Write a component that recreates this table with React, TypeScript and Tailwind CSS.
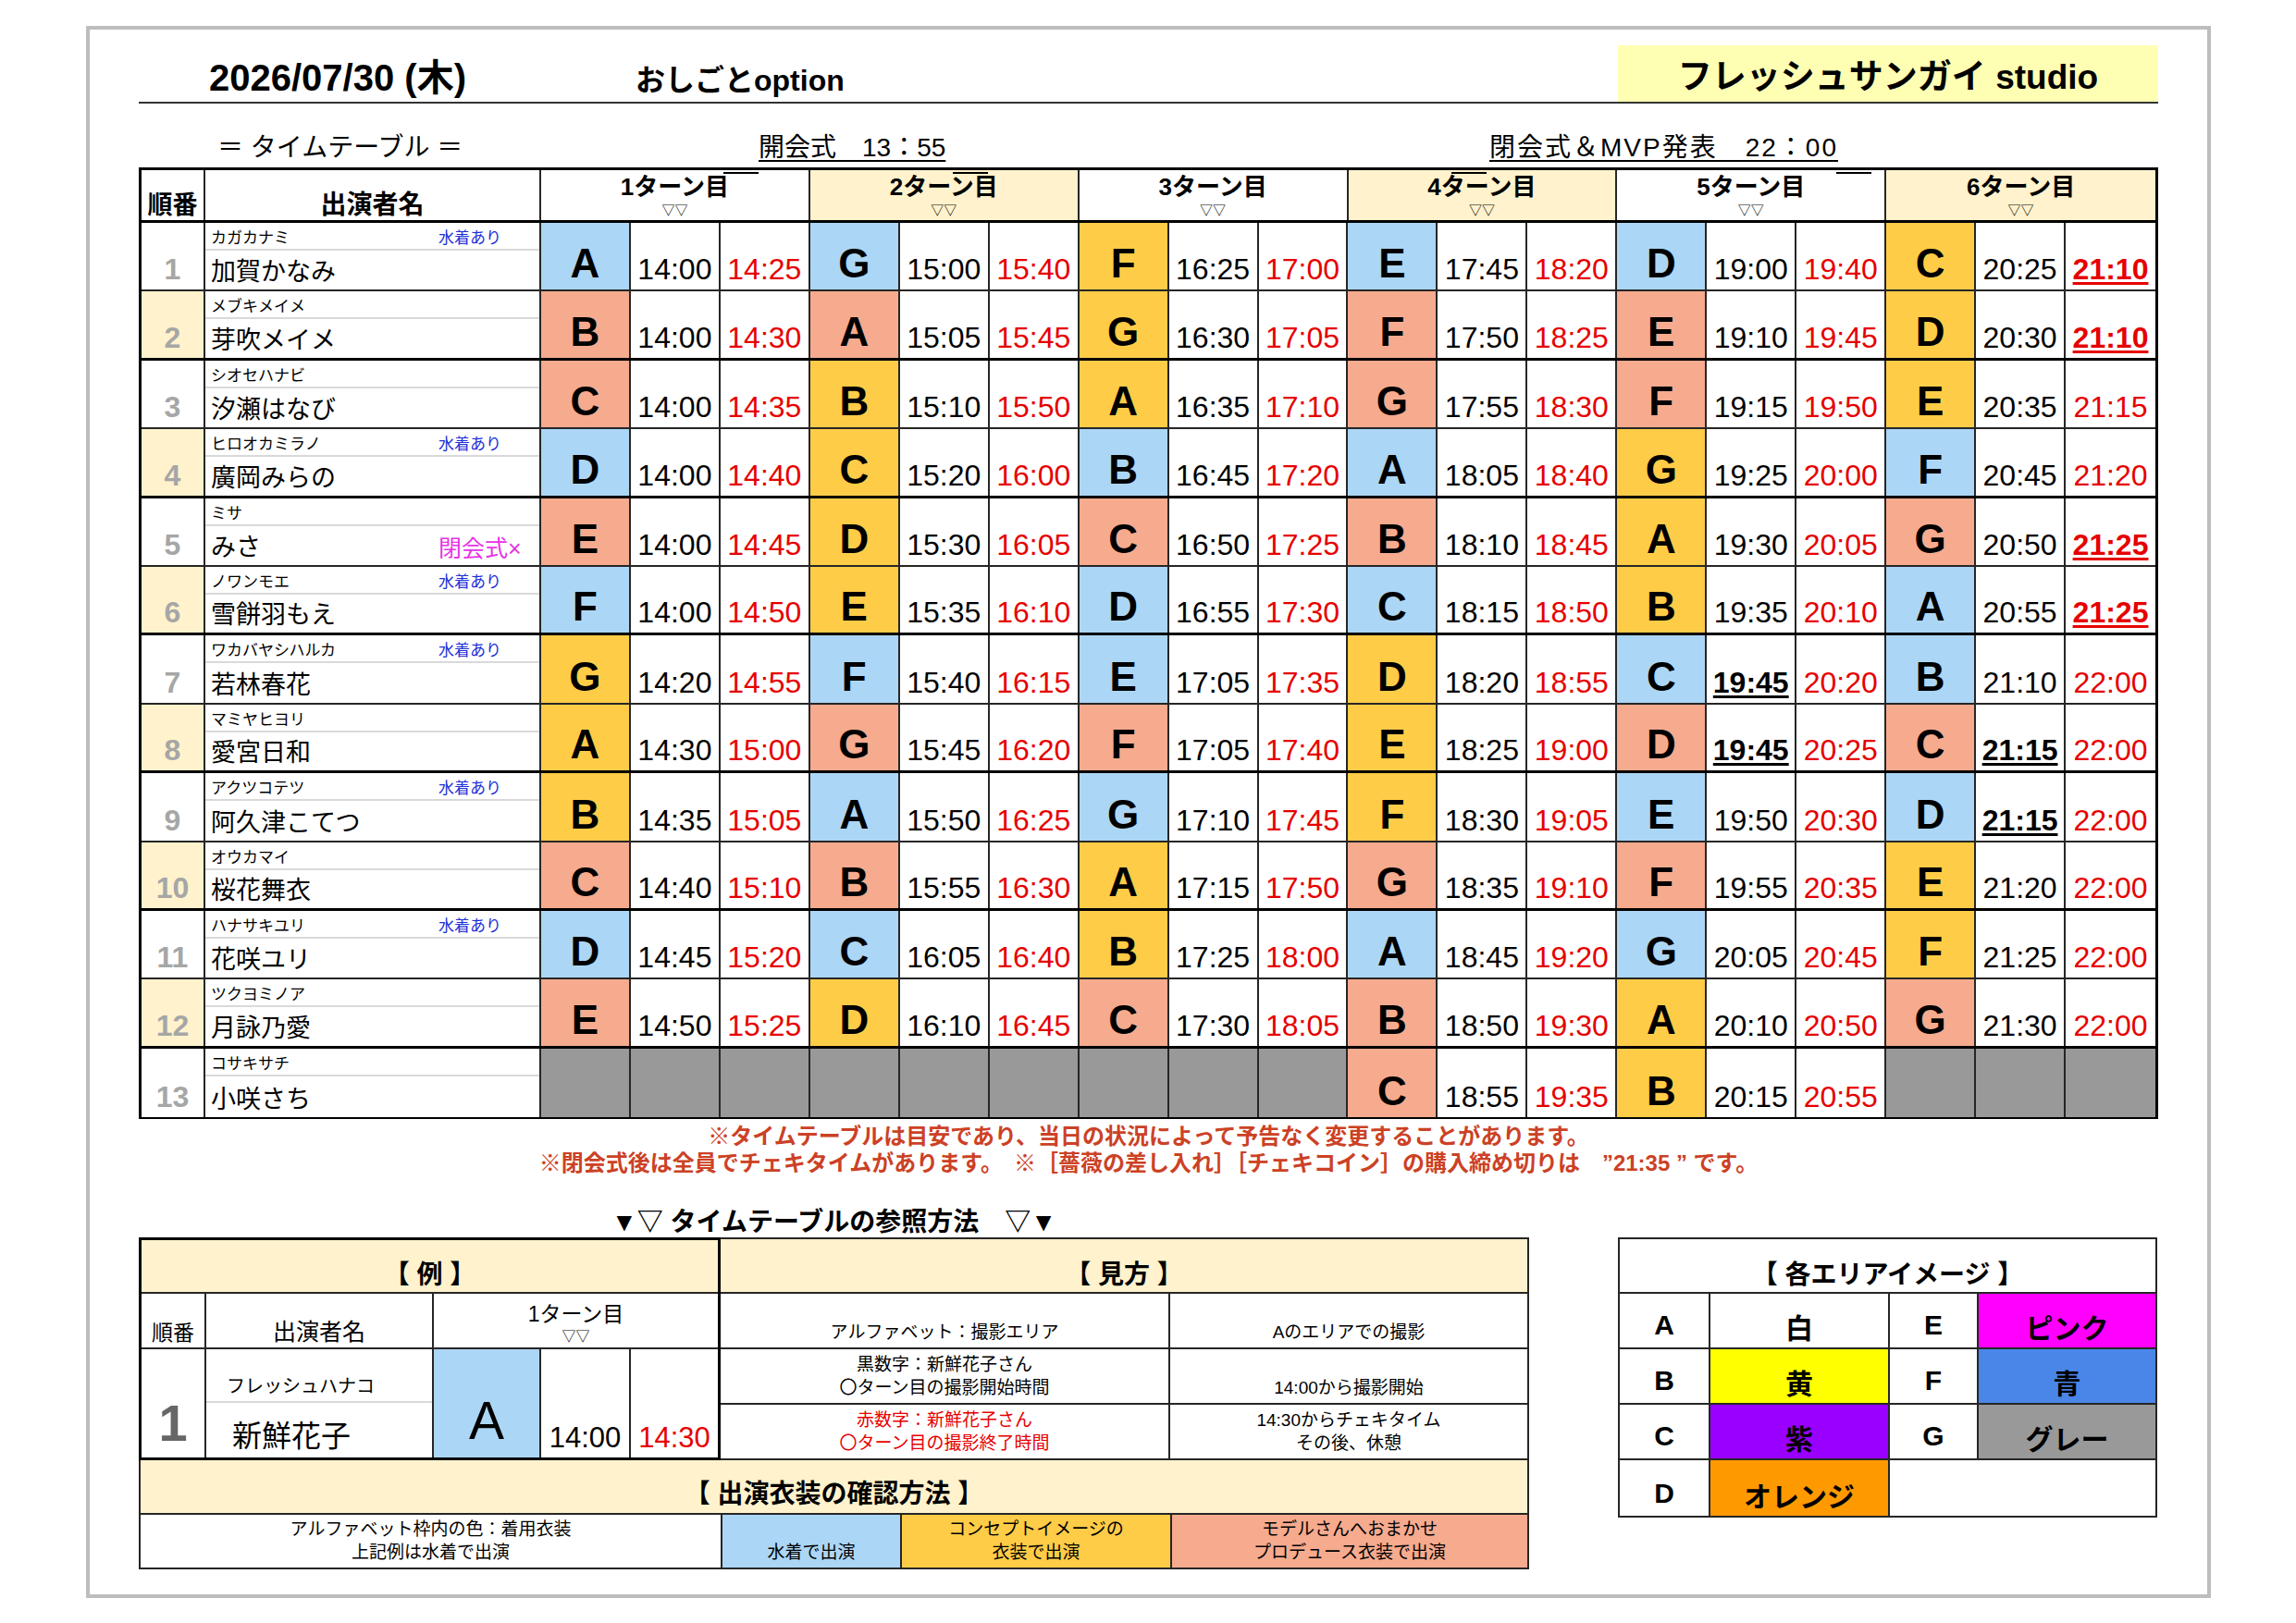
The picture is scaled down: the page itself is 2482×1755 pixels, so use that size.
import React from "react";

type Color = "b" | "y" | "s";
type Slot = { l: string; c: Color; s: string; e: string; sb: boolean; eb: boolean } | null;

const BG: Record<Color, string> = {
  b: "bg-[#acd6f5]",
  y: "bg-[#ffcc47]",
  s: "bg-[#f6aa8e]",
};

const LINE = "border-[#262626]";

// "Ab 14:00 14:25!"  → ! on end = bold red underline, ! before start = bold black underline
function parse(t: string): Slot[] {
  return t.split("|").map((p) => {
    if (p === "-") return null;
    const [lc, s, e] = p.split(" ");
    return {
      l: lc[0],
      c: lc[1] as Color,
      s: s.replace("!", ""),
      e: e.replace("!", ""),
      sb: s.startsWith("!"),
      eb: e.endsWith("!"),
    };
  });
}

const rows = [
  { kana: "カガカナミ", name: "加賀かなみ", tag: "水着あり", t: "Ab 14:00 14:25|Gb 15:00 15:40|Fy 16:25 17:00|Eb 17:45 18:20|Db 19:00 19:40|Cy 20:25 21:10!" },
  { kana: "メブキメイメ", name: "芽吹メイメ", tag: "", t: "Bs 14:00 14:30|As 15:05 15:45|Gy 16:30 17:05|Fs 17:50 18:25|Es 19:10 19:45|Dy 20:30 21:10!" },
  { kana: "シオセハナビ", name: "汐瀬はなび", tag: "", t: "Cs 14:00 14:35|By 15:10 15:50|Ay 16:35 17:10|Gs 17:55 18:30|Fs 19:15 19:50|Ey 20:35 21:15" },
  { kana: "ヒロオカミラノ", name: "廣岡みらの", tag: "水着あり", t: "Db 14:00 14:40|Cy 15:20 16:00|Bb 16:45 17:20|Ab 18:05 18:40|Gy 19:25 20:00|Fb 20:45 21:20" },
  { kana: "ミサ", name: "みさ", tag: "閉会式×", t: "Es 14:00 14:45|Dy 15:30 16:05|Cs 16:50 17:25|Bs 18:10 18:45|Ay 19:30 20:05|Gs 20:50 21:25!" },
  { kana: "ノワンモエ", name: "雪餅羽もえ", tag: "水着あり", t: "Fb 14:00 14:50|Ey 15:35 16:10|Db 16:55 17:30|Cb 18:15 18:50|By 19:35 20:10|Ab 20:55 21:25!" },
  { kana: "ワカバヤシハルカ", name: "若林春花", tag: "水着あり", t: "Gy 14:20 14:55|Fb 15:40 16:15|Eb 17:05 17:35|Dy 18:20 18:55|Cb !19:45 20:20|Bb 21:10 22:00" },
  { kana: "マミヤヒヨリ", name: "愛宮日和", tag: "", t: "Ay 14:30 15:00|Gs 15:45 16:20|Fs 17:05 17:40|Ey 18:25 19:00|Ds !19:45 20:25|Cs !21:15 22:00" },
  { kana: "アクツコテツ", name: "阿久津こてつ", tag: "水着あり", t: "By 14:35 15:05|Ab 15:50 16:25|Gb 17:10 17:45|Fy 18:30 19:05|Eb 19:50 20:30|Db !21:15 22:00" },
  { kana: "オウカマイ", name: "桜花舞衣", tag: "", t: "Cs 14:40 15:10|Bs 15:55 16:30|Ay 17:15 17:50|Gs 18:35 19:10|Fs 19:55 20:35|Ey 21:20 22:00" },
  { kana: "ハナサキユリ", name: "花咲ユリ", tag: "水着あり", t: "Db 14:45 15:20|Cb 16:05 16:40|By 17:25 18:00|Ab 18:45 19:20|Gb 20:05 20:45|Fy 21:25 22:00" },
  { kana: "ツクヨミノア", name: "月詠乃愛", tag: "", t: "Es 14:50 15:25|Dy 16:10 16:45|Cs 17:30 18:05|Bs 18:50 19:30|Ay 20:10 20:50|Gs 21:30 22:00" },
  { kana: "コサキサチ", name: "小咲さち", tag: "", t: "-|-|-|Cs 18:55 19:35|By 20:15 20:55|-" },
];

// small stray lines over some turn headers (left offset in px, or null)
const turnMarks: (number | null)[] = [197, 154, null, 111, 237, null];

function TableHeader() {
  return (
    <div className="grid h-[57px] grid-cols-[69px_363px_repeat(6,minmax(0,1fr))] border-b-[3px] border-black">
      <div className={`flex items-end justify-center border-r-2 ${LINE} pb-[2px] text-[27px] font-bold leading-none`}>順番</div>
      <div className={`flex items-end justify-center border-r-2 ${LINE} pb-[2px] text-[28px] font-bold leading-none`}>出演者名</div>
      {[1, 2, 3, 4, 5, 6].map((n, k) => (
        <div
          key={n}
          className={`relative flex flex-col items-center justify-end pb-[4px] ${k < 5 ? `border-r-2 ${LINE}` : ""} ${n % 2 === 0 ? "bg-[#fff2cc]" : ""}`}
        >
          {turnMarks[k] !== null && (
            <span className="absolute top-[2px] h-[2px] w-[38px] bg-black" style={{ left: turnMarks[k] as number }} />
          )}
          <span className="text-[26px] font-bold leading-none">{n}ターン目</span>
          <span className="mt-[5px] text-[14px] leading-none">▽▽</span>
        </div>
      ))}
    </div>
  );
}

function Row({ r, i }: { r: (typeof rows)[number]; i: number }) {
  const slots = parse(r.t);
  const rowBorder = i === 12 ? "" : i % 2 === 1 ? "border-b-[3px] border-black" : `border-b-2 ${LINE}`;
  return (
    <div className={`grid h-[74.4px] grid-cols-[69px_363px_repeat(18,minmax(0,1fr))] ${rowBorder}`}>
      <div
        className={`flex items-end justify-center border-r-2 ${LINE} pb-[6px] text-[32px] font-bold leading-none text-[#a6a6a6] ${i % 2 === 1 ? "bg-[#fff2cc]" : ""}`}
      >
        {i + 1}
      </div>
      <div className={`flex flex-col border-r-2 ${LINE}`}>
        <div className="flex h-[30px] items-end border-b-2 border-[#d9d9d9] pb-[3px] text-[17px] leading-none">
          <span className="w-[252px] pl-[6px]">{r.kana}</span>
          {r.tag === "水着あり" && <span className="text-[#1c2fd6]">水着あり</span>}
        </div>
        <div className="flex flex-1 items-end pb-[5px] leading-none">
          <span className="w-[252px] pl-[6px] text-[27px]">{r.name}</span>
          {r.tag === "閉会式×" && <span className="text-[25px] text-[#e633e6]">閉会式×</span>}
        </div>
      </div>
      {slots.flatMap((s, k) => {
        const edge = (j: number) => (k === 5 && j === 2 ? "" : `border-r-2 ${LINE}`);
        if (!s) return [0, 1, 2].map((j) => <div key={`${k}-${j}`} className={`bg-[#999999] ${edge(j)}`} />);
        return [
          <div key={`${k}-l`} className={`${BG[s.c]} flex items-end justify-center ${edge(0)} pb-[6px] text-[44px] font-bold leading-none`}>
            {s.l}
          </div>,
          <div key={`${k}-s`} className={`flex items-end justify-center ${edge(1)} pb-[6px] text-[32px] leading-none`}>
            <span className={s.sb ? "font-bold underline decoration-[3px] underline-offset-[3px]" : ""}>{s.s}</span>
          </div>,
          <div key={`${k}-e`} className={`flex items-end justify-center ${edge(2)} pb-[6px] text-[32px] leading-none text-[#e60000]`}>
            <span className={s.eb ? "font-bold underline decoration-[3px] underline-offset-[3px]" : ""}>{s.e}</span>
          </div>,
        ];
      })}
    </div>
  );
}

function Example() {
  return (
    <div className="flex w-[629px] flex-col border-[3px] border-black">
      <div className={`flex h-[58px] items-end justify-center border-b-2 ${LINE} bg-[#fff2cc] pb-[4px] text-[28px] font-bold leading-none`}>
        【 例 】
      </div>
      <div className={`grid h-[60px] grid-cols-[70px_246px_minmax(0,1fr)] border-b-2 ${LINE}`}>
        <div className={`flex items-end justify-center border-r-2 ${LINE} pb-[4px] text-[23px] leading-none`}>順番</div>
        <div className={`flex items-end justify-center border-r-2 ${LINE} pb-[4px] text-[25px] leading-none`}>出演者名</div>
        <div className="flex flex-col items-center justify-end pb-[5px]">
          <span className="text-[23px] leading-none">1ターン目</span>
          <span className="mt-[4px] text-[15px] leading-none">▽▽</span>
        </div>
      </div>
      <div className="grid flex-1 grid-cols-[70px_246px_116px_97px_minmax(0,1fr)]">
        <div className={`flex items-end justify-center border-r-2 ${LINE} pb-[9px] text-[56px] font-bold leading-none text-[#666666]`}>1</div>
        <div className={`flex flex-col border-r-2 ${LINE}`}>
          <div className="flex h-[58px] items-end border-b-2 border-[#d9d9d9] pb-[6px] pl-[22px] text-[20px] leading-none">フレッシュハナコ</div>
          <div className="flex flex-1 items-end pb-[7px] pl-[28px] text-[32px] leading-none">新鮮花子</div>
        </div>
        <div className={`flex items-end justify-center border-r-2 ${LINE} bg-[#acd6f5] pb-[11px] text-[57px] leading-none`}>A</div>
        <div className={`flex items-end justify-center border-r-2 ${LINE} pb-[6px] text-[31px] leading-none`}>14:00</div>
        <div className="flex items-end justify-center pb-[6px] text-[31px] leading-none text-[#e60000]">14:30</div>
      </div>
    </div>
  );
}

function Howto() {
  const cell = "flex flex-col items-center justify-end pb-[4px] text-[19px] leading-[25px]";
  return (
    <div className={`flex flex-1 flex-col border-y-2 border-r-2 ${LINE}`}>
      <div className={`flex h-[59px] items-end justify-center border-b-2 ${LINE} bg-[#fff2cc] pb-[4px] text-[28px] font-bold leading-none`}>
        【 見方 】
      </div>
      <div className={`grid h-[60px] grid-cols-[486px_minmax(0,1fr)] border-b-2 ${LINE}`}>
        <div className={`${cell} border-r-2 ${LINE}`}>アルファベット：撮影エリア</div>
        <div className={cell}>Aのエリアでの撮影</div>
      </div>
      <div className={`grid h-[60px] grid-cols-[486px_minmax(0,1fr)] border-b-2 ${LINE}`}>
        <div className={`${cell} border-r-2 ${LINE}`}>
          <span>黒数字：新鮮花子さん</span>
          <span>〇ターン目の撮影開始時間</span>
        </div>
        <div className={cell}>14:00から撮影開始</div>
      </div>
      <div className="grid flex-1 grid-cols-[486px_minmax(0,1fr)]">
        <div className={`${cell} border-r-2 ${LINE} text-[#e60000]`}>
          <span>赤数字：新鮮花子さん</span>
          <span>〇ターン目の撮影終了時間</span>
        </div>
        <div className={cell}>
          <span>14:30からチェキタイム</span>
          <span>その後、休憩</span>
        </div>
      </div>
    </div>
  );
}

function Costume() {
  const cell = "flex flex-col items-center justify-end pb-[4px] text-[19px] leading-[25px]";
  return (
    <>
      <div className={`flex h-[59px] items-end justify-center border-x-2 border-b-2 ${LINE} bg-[#fff2cc] pb-[6px] text-[28px] font-bold leading-none`}>
        【 出演衣装の確認方法 】
      </div>
      <div className={`grid h-[59px] grid-cols-[629px_194px_292px_minmax(0,1fr)] border-x-2 border-b-2 ${LINE}`}>
        <div className={`${cell} border-r-2 ${LINE}`}>
          <span>アルファベット枠内の色：着用衣装</span>
          <span>上記例は水着で出演</span>
        </div>
        <div className={`${cell} border-r-2 ${LINE} bg-[#acd6f5]`}>水着で出演</div>
        <div className={`${cell} border-r-2 ${LINE} bg-[#ffcc47]`}>
          <span>コンセプトイメージの</span>
          <span>衣装で出演</span>
        </div>
        <div className={`${cell} bg-[#f6aa8e]`}>
          <span>モデルさんへおまかせ</span>
          <span>プロデュース衣装で出演</span>
        </div>
      </div>
    </>
  );
}

const areas: [string, string, string][] = [
  ["A", "白", ""],
  ["B", "黄", "bg-[#ffff00]"],
  ["C", "紫", "bg-[#9900ff]"],
  ["D", "オレンジ", "bg-[#ff9900]"],
  ["E", "ピンク", "bg-[#ff00ff]"],
  ["F", "青", "bg-[#4a86e8]"],
  ["G", "グレー", "bg-[#999999]"],
];

function Legend() {
  return (
    <div className={`ml-[96px] flex w-[583px] flex-col border-2 ${LINE}`}>
      <div className={`flex h-[59px] items-end justify-center border-b-2 ${LINE} pb-[4px] text-[28px] font-bold leading-none`}>
        【 各エリアイメージ 】
      </div>
      {[0, 1, 2, 3].map((i) => {
        const left = areas[i];
        const right = i < 3 ? areas[i + 4] : null;
        return (
          <div
            key={i}
            className={`grid h-[60px] grid-cols-[98px_194px_96px_minmax(0,1fr)] text-[30px] font-bold leading-none ${i < 3 ? `border-b-2 ${LINE}` : "h-[58px]"}`}
          >
            <div className={`flex items-end justify-center border-r-2 ${LINE} pb-[9px]`}>{left[0]}</div>
            <div className={`flex items-end justify-center border-r-2 ${LINE} ${left[2]} pb-[5px]`}>{left[1]}</div>
            {right ? (
              <>
                <div className={`flex items-end justify-center border-r-2 ${LINE} pb-[9px]`}>{right[0]}</div>
                <div className={`flex items-end justify-center ${right[2]} pb-[5px]`}>{right[1]}</div>
              </>
            ) : (
              <div className="col-span-2" />
            )}
          </div>
        );
      })}
    </div>
  );
}

export default function App() {
  return (
    <div className="h-[1755px] w-[2482px] overflow-hidden bg-white pt-[28px] pl-[93px] font-['Liberation_Sans','Noto_Sans_CJK_JP',sans-serif] text-black">
      <div className="h-[1700px] w-[2297px] border-4 border-[#bdbdbd]">
        <div className="ml-[53px] w-[2183px]">
          {/* title row */}
          <div className="mt-[17px] flex h-[63px] items-end border-b-2 border-[#333333]">
            <div className="w-[537px] pb-[6px] pl-[76px] text-[40px] font-bold leading-none">2026/07/30 (木)</div>
            <div className="pb-[7px] text-[32px] font-bold leading-none">おしごとoption</div>
            <div className="ml-auto flex h-full w-[584px] items-end justify-center bg-[#ffffb3] pb-[8px] text-[37px] font-bold leading-none">
              フレッシュサンガイ studio
            </div>
          </div>

          <div className="flex h-[69px] items-end pb-[7px] text-[28px] leading-none">
            <span className="w-[670px] pl-[85px]">＝ タイムテーブル ＝</span>
            <span className="w-[790px]">
              <span className="underline decoration-2 underline-offset-[4px]">開会式　13：55</span>
            </span>
            <span className="tracking-[2px] underline decoration-2 underline-offset-[4px]">閉会式＆MVP発表　22：00</span>
          </div>

          {/* timetable */}
          <div className="border-x-[3px] border-t-[3px] border-b-2 border-black">
            <TableHeader />
            {rows.map((r, i) => (
              <Row key={r.name} r={r} i={i} />
            ))}
          </div>

          <div className="flex h-[128px] flex-col items-center pt-[4px] text-[24px] font-bold leading-[29px] text-[#cc4125]">
            <span>※タイムテーブルは目安であり、当日の状況によって予告なく変更することがあります。</span>
            <span>※閉会式後は全員でチェキタイムがあります。　※［薔薇の差し入れ］［チェキコイン］の購入締め切りは　”21:35 ” です。</span>
          </div>

          {/* how to read */}
          <div className="flex items-start">
            <div className="relative w-[1503px]">
              <div className="absolute -top-[30px] left-0 w-full text-center text-[28px] font-bold leading-none">▼▽ タイムテーブルの参照方法　▽▼</div>
              <div className="flex h-[241px]">
                <Example />
                <Howto />
              </div>
              <Costume />
            </div>
            <Legend />
          </div>
        </div>
      </div>
    </div>
  );
}
